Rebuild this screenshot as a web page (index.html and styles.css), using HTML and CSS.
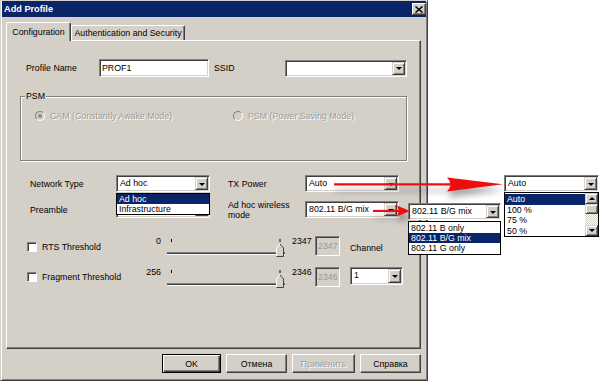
FILE: index.html
```html
<!DOCTYPE html>
<html lang="en">
<head>
    <meta charset="UTF-8">
    <meta name="viewport" content="width=device-width, initial-scale=1.0">
    <title>Add Profile</title>
    <link rel="stylesheet" href="styles.css">
</head>
<body>
    <div class="dialog">
        <div class="titlebar">
            <span>Add Profile</span>
            <span class="close-btn">
                <svg width="8" height="7" viewBox="0 0 8 7"><path d="M0.5 0.5L7.5 6.5M7.5 0.5L0.5 6.5" stroke="#000" stroke-width="1.5"/></svg>
            </span>
        </div>
        <div class="client">
            <div class="tabs">
                <div class="tab active">Configuration</div>
                <div class="tab">Authentication and Security</div>
            </div>

            <div class="panel">
                <div class="row row-profile">
                    <span class="lbl w-profile">Profile Name</span>
                    <div class="edit w-name">PROF1</div>
                    <span class="lbl w-ssid">SSID</span>
                    <div class="combo w-ssidbox"><span class="combo-text"></span><span class="combo-btn"></span></div>
                </div>

                <div class="group">
                    <div class="legend">PSM</div>
                    <div class="radios">
                        <div class="radio-item first"><span class="radio on"></span><span class="disabled">CAM (Constantly Awake Mode)</span></div>
                        <div class="radio-item"><span class="radio"></span><span class="disabled">PSM (Power Saving Mode)</span></div>
                    </div>
                </div>

                <div class="row row-net">
                    <span class="lbl w-left">Network Type</span>
                    <div class="combo-wrap">
                        <div class="combo w94"><span class="combo-text">Ad hoc</span><span class="combo-btn"></span></div>
                        <div class="list drop-list">
                            <div class="list-item sel">Ad hoc</div>
                            <div class="list-item">Infrastructure</div>
                        </div>
                    </div>
                    <span class="lbl w-right">TX Power</span>
                    <div class="combo w94"><span class="combo-text">Auto</span><span class="combo-btn"></span></div>
                </div>

                <div class="row row-mode">
                    <span class="lbl w-left">Preamble</span>
                    <div class="combo w94"><span class="combo-text"></span><span class="combo-btn"></span></div>
                    <span class="lbl w-right two-line">Ad hoc wireless<br>mode</span>
                    <div class="combo w94"><span class="combo-text">802.11 B/G mix</span><span class="combo-btn"></span></div>
                </div>

                <div class="row row-rts">
                    <div class="chk-cell"><span class="check"></span><span>RTS Threshold</span></div>
                    <span class="num">0</span>
                    <div class="slider">
                        <span class="tick"></span>
                        <span class="track"></span>
                        <svg class="thumb" width="9" height="18" viewBox="0 0 9 18">
                            <path d="M4 0V3" stroke="#000"/>
                            <path d="M0.5 17.5V9L4 5L7.5 9V17.5Z" fill="#d4d0c8"/>
                            <path d="M0.5 17.5V9L4 5" stroke="#fff" fill="none"/>
                            <path d="M4 5L7.5 9V17.5H0.5" stroke="#404040" fill="none"/>
                        </svg>
                    </div>
                    <span class="num2">2347</span>
                    <div class="edit disabled-edit">2347</div>
                    <span class="chan-label">Channel</span>
                </div>

                <div class="row row-frag">
                    <div class="chk-cell"><span class="check"></span><span>Fragment Threshold</span></div>
                    <span class="num">256</span>
                    <div class="slider">
                        <span class="tick"></span>
                        <span class="track"></span>
                        <svg class="thumb" width="9" height="18" viewBox="0 0 9 18">
                            <path d="M4 0V3" stroke="#000"/>
                            <path d="M0.5 17.5V9L4 5L7.5 9V17.5Z" fill="#d4d0c8"/>
                            <path d="M0.5 17.5V9L4 5" stroke="#fff" fill="none"/>
                            <path d="M4 5L7.5 9V17.5H0.5" stroke="#404040" fill="none"/>
                        </svg>
                    </div>
                    <span class="num2">2346</span>
                    <div class="edit disabled-edit">2346</div>
                    <div class="combo w-chan"><span class="combo-text">1</span><span class="combo-btn"></span></div>
                </div>
            </div>

            <div class="buttons">
                <div class="btn default w-ok">OK</div>
                <div class="btn w-cancel">Отмена</div>
                <div class="btn w-apply"><span class="disabled">Применить</span></div>
                <div class="btn w-help">Справка</div>
            </div>
        </div>
    </div>

    <!-- callouts drawn over the dialog -->
    <svg class="arrows" width="600" height="384" viewBox="0 0 600 384">
        <defs>
            <filter id="shade" x="-20%" y="-50%" width="140%" height="300%">
                <feDropShadow dx="1" dy="6" stdDeviation="3" flood-color="#000" flood-opacity="0.35"/>
            </filter>
        </defs>
        <g filter="url(#shade)" fill="#ee1111">
            <path d="M334 183.2H452V185.4H334Z"/>
            <path d="M447 177.5L503 184.3L447 191.5Q454 184.5 447 177.5Z"/>
        </g>
        <g filter="url(#shade)" fill="#ee1111">
            <path d="M373 209.9H400V212H373Z"/>
            <path d="M397 205.5L410 211L397 216.5Q400 211 397 205.5Z"/>
        </g>
    </svg>

    <div class="callout callout-mode">
        <div class="combo"><span class="combo-text">802.11 B/G mix</span><span class="combo-btn"></span></div>
        <div class="list">
            <div class="list-item">802.11 B only</div>
            <div class="list-item sel">802.11 B/G mix</div>
            <div class="list-item">802.11 G only</div>
        </div>
    </div>

    <div class="callout callout-tx">
        <div class="combo"><span class="combo-text">Auto</span><span class="combo-btn"></span></div>
        <div class="list list-tx">
            <div class="list-items">
                <div class="list-item sel">Auto</div>
                <div class="list-item">100 %</div>
                <div class="list-item">75 %</div>
                <div class="list-item">50 %</div>
            </div>
            <div class="sb">
                <span class="sb-btn up"></span>
                <span class="sb-thumb"></span>
                <span class="sb-track"></span>
                <span class="sb-btn down"></span>
            </div>
        </div>
    </div>
</body>
</html>
```

FILE: styles.css
```css
* { box-sizing: border-box; }
body { margin: 0; width: 600px; height: 384px; overflow: hidden; position: relative; background: #fff; font-family: "Liberation Sans", Arial, sans-serif; font-size: 8.8px; color: #000; }

/* window frame */
.dialog { width: 428px; height: 381px; display: flex; flex-direction: column; background: #d4d0c8; border: 1px solid; border-color: #d4d0c8 #404040 #404040 #d4d0c8; box-shadow: inset 1px 1px #fff, inset -1px -1px #808080; padding: 0 1px 1px 1px; }
.titlebar { height: 16px; display: flex; align-items: center; justify-content: space-between; padding: 0 0 0 2px; background: #0a246a; color: #fff; font-weight: bold; font-size: 9.2px; }
.close-btn { width: 14px; height: 12px; display: flex; align-items: center; justify-content: center; background: #d4d0c8; border: 1px solid; border-color: #fff #404040 #404040 #fff; box-shadow: inset -1px -1px #808080; }
.client { flex: 1; display: flex; flex-direction: column; padding: 5px 5px 0 4px; }

/* tabs */
.tabs { height: 18px; display: flex; align-items: flex-end; position: relative; z-index: 1; }
.tab { height: 15px; width: 114px; display: flex; align-items: center; justify-content: center; white-space: nowrap; background: #d4d0c8; border: 1px solid; border-bottom: none; border-color: #fff #404040 #404040 #fff; box-shadow: inset -1px 0 #808080; border-radius: 2px 2px 0 0; }
.tab.active { width: 65px; height: 19px; margin-bottom: -1px; }

.panel { height: 309px; border: 1px solid; border-color: #fff #404040 #404040 #fff; box-shadow: inset -1px -1px #808080; }

/* generic controls */
.row { display: flex; align-items: center; }
.lbl { white-space: nowrap; }
.disabled { color: #9a9a9a; text-shadow: 1px 1px 0 #fff; white-space: nowrap; }

.edit { height: 18px; padding: 1px 2px; line-height: 14px; background: #fff; border: 1px solid; border-color: #808080 #fff #fff #808080; box-shadow: inset 1px 1px #404040, inset -1px -1px #d4d0c8; }
.disabled-edit { width: 25px; height: 20px; line-height: 16px; padding: 1px 2px; background: #d4d0c8; color: #9a9a9a; margin-left: 2px; }

.combo { display: flex; height: 17px; padding: 1px; background: #fff; border: 1px solid; border-color: #808080 #fff #fff #808080; box-shadow: inset 1px 1px #404040, inset -1px -1px #d4d0c8; }
.combo-text { flex: 1; padding-left: 2px; line-height: 13px; white-space: nowrap; overflow: hidden; }
.combo-btn, .sb-btn, .sb-thumb { background: #d4d0c8; border: 1px solid; border-color: #d4d0c8 #404040 #404040 #d4d0c8; box-shadow: inset 1px 1px #fff, inset -1px -1px #808080; }
.combo-btn { width: 13px; display: flex; align-items: center; justify-content: center; }
.combo-btn::after { content: ""; border-left: 3px solid transparent; border-right: 3px solid transparent; border-top: 3px solid #000; margin-top: 1px; }

.check { width: 10px; height: 10px; background: #fff; border: 1px solid; border-color: #808080 #fff #fff #808080; box-shadow: inset 1px 1px #404040; }
.radio { width: 10px; height: 10px; border-radius: 50%; display: flex; align-items: center; justify-content: center; background: #d4d0c8; border: 1px solid; border-color: #808080 #fff #fff #808080; }
.radio.on::after { content: ""; width: 4px; height: 4px; border-radius: 50%; background: #8c8c8c; }

.list { background: #fff; border: 1px solid #000; }
.list-item { height: 10px; line-height: 10px; padding-left: 2px; white-space: nowrap; }
.list-item.sel { background: #0a246a; color: #fff; }

/* panel rows */
.row-profile { height: 18px; margin: 18px 0 0 19px; }
.w-profile { width: 73px; }
.w-name { width: 110px; }
.w-ssid { width: 71px; margin-left: 5px; }
.w-ssidbox { width: 122px; }

.group { width: 387px; height: 65px; margin: 19px 0 0 13px; border: 1px solid #808080; box-shadow: inset 1px 1px #fff, 1px 1px #fff; }
.legend { width: fit-content; margin: -6px 0 0 4px; padding: 0 1px; line-height: 11px; background: #d4d0c8; }
.radios { display: flex; margin: 8px 0 0 14px; }
.radio-item { display: flex; align-items: center; gap: 5px; height: 11px; }
.radio-item.first { width: 198px; }

.row-net { height: 17px; margin: 14px 0 0 23px; }
.row-mode { height: 17px; margin: 9px 0 0 23px; }
.w-left { width: 86px; }
.w-right { width: 77px; margin-left: 18px; }
.two-line { line-height: 10px; }
.w94 { width: 94px; }
.combo-wrap { position: relative; }
.drop-list { position: absolute; left: 0; top: 18px; width: 94px; height: 22px; z-index: 2; }

.row-rts { height: 21px; margin: 18px 0 0 20px; align-items: flex-start; }
.row-frag { height: 20px; margin: 10px 0 0 20px; align-items: flex-start; }
.chk-cell { width: 113px; height: 100%; display: flex; align-items: center; gap: 5px; white-space: nowrap; }
.num { width: 21px; text-align: right; line-height: 11px; }
.num2 { width: 21px; margin-left: 7px; line-height: 11px; }
.slider { width: 118px; height: 21px; margin-left: 6px; position: relative; }
.tick { position: absolute; left: 4px; top: 3px; width: 1px; height: 3px; background: #000; }
.track { position: absolute; left: 0; right: 0; top: 16px; height: 3px; background: linear-gradient(#808080 0 1px, #404040 1px 2px, #fff 2px); }
.thumb { position: absolute; left: 109px; top: 3px; }
.chan-label { margin: 7px 0 0 10px; }
.w-chan { width: 53px; height: 18px; margin-left: 10px; }

/* buttons */
.buttons { display: flex; justify-content: flex-end; gap: 5px; margin-top: 5px; }
.btn { height: 19px; display: flex; align-items: center; justify-content: center; background: #d4d0c8; border: 1px solid; border-color: #fff #404040 #404040 #fff; box-shadow: inset -1px -1px #808080; }
.btn.default { border-color: #000; box-shadow: inset 1px 1px #fff, inset -1px -1px #404040, inset -2px -2px #808080; }
.w-ok { width: 59px; }
.w-cancel { width: 61px; }
.w-apply { width: 63px; }
.w-help { width: 61px; }

/* callouts */
.arrows { position: absolute; left: 0; top: 0; z-index: 5; pointer-events: none; }
.callout { position: absolute; z-index: 4; }
.callout-mode { left: 408px; top: 203px; width: 93px; }
.callout-mode .list { margin-top: 1px; padding: 1px 0; }
.callout-tx { left: 504px; top: 175px; width: 95px; }
.list-tx { height: 45px; display: flex; }
.list-items { flex: 1; padding-top: 1px; }
.list-tx .list-item { height: 10.5px; line-height: 10.5px; }
.sb { width: 13px; display: flex; flex-direction: column; }
.sb-btn { height: 11px; display: flex; align-items: center; justify-content: center; }
.sb-btn.up::after { content: ""; border-left: 3px solid transparent; border-right: 3px solid transparent; border-bottom: 3px solid #000; }
.sb-btn.down::after { content: ""; border-left: 3px solid transparent; border-right: 3px solid transparent; border-top: 3px solid #000; }
.sb-thumb { height: 10px; }
.sb-track { flex: 1; background: repeating-conic-gradient(#d4d0c8 0 25%, #fff 0 50%) 0 0 / 2px 2px; }
```
